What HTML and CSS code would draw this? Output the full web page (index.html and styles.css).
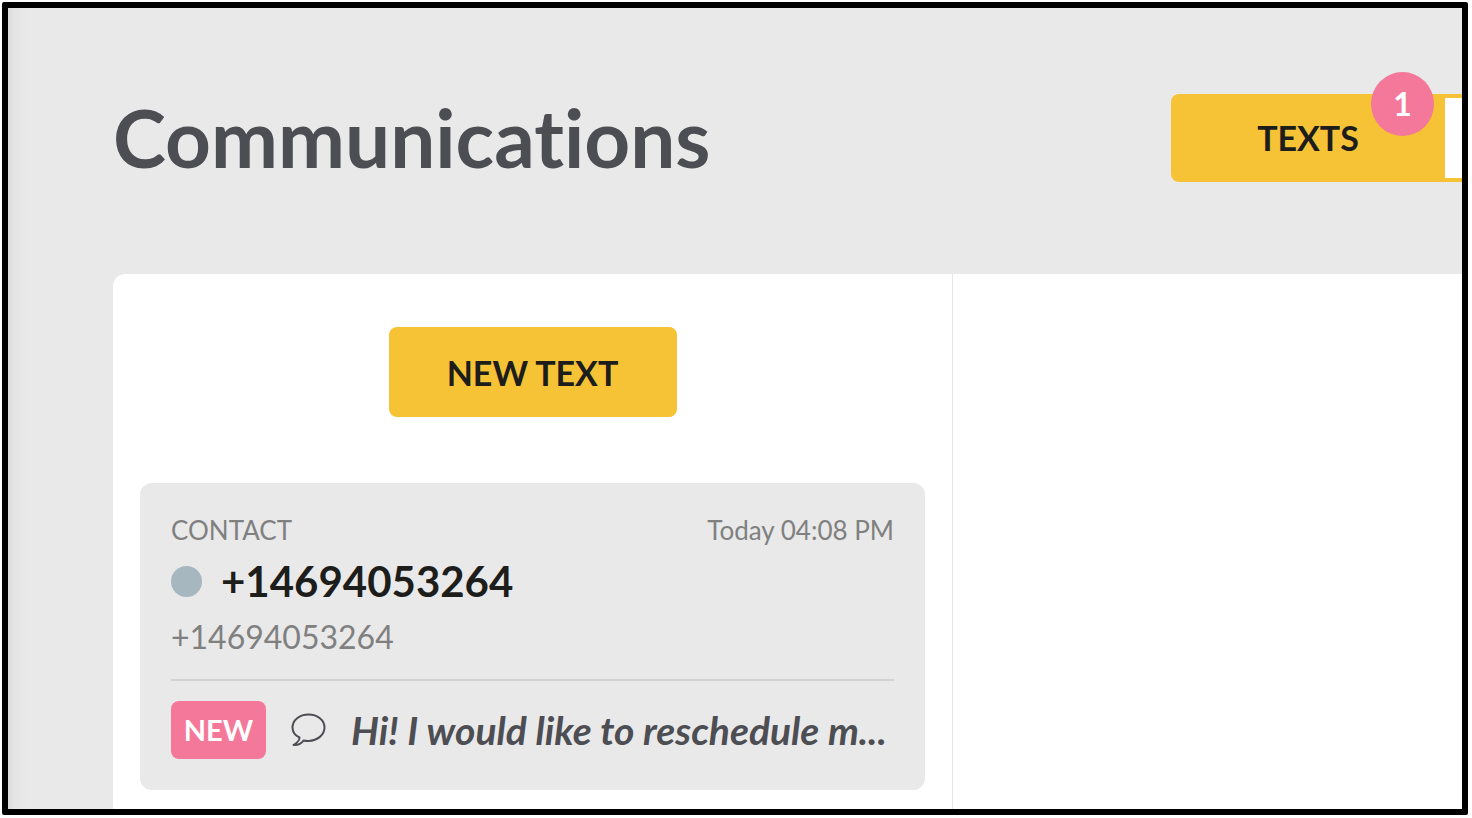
FILE: index.html
```html
<!DOCTYPE html>
<html lang="en">
<head>
	<meta charset="UTF-8">
	<title>Communications</title>
	<link rel="stylesheet" href="styles.css">
</head>
<body>
	<div class="frame">
		<header class="header">
			<h1 class="title">Communications</h1>
			<div class="toggle">
				<button type="button" class="tab active">TEXTS<span class="badge">1</span></button>
				<div class="rest"></div>
			</div>
		</header>
		<main class="panel">
			<section class="list">
				<button type="button" class="new-text">NEW TEXT</button>
				<article class="card">
					<div class="meta">
						<span>CONTACT</span>
						<time>Today 04:08 PM</time>
					</div>
					<h2 class="name"><span class="dot"></span>+14694053264</h2>
					<p class="phone">+14694053264</p>
					<div class="message">
						<span class="tag">NEW</span>
						<svg class="bubble" viewBox="0 0 36 36" aria-hidden="true">
							<path d="M18.500 2.500C9.500 2.500 2.500 8 2.500 15.500C2.500 20 5 23.500 9.500 25.500C10 28.500 7.500 30.500 3.500 33C8.500 33.500 11.500 31.500 13.500 28.500C15 29 17 29 18.500 29C27.500 28.500 34.500 23 34.500 15.500C34.500 8 27.500 2.500 18.500 2.500Z"/>
						</svg>
						<p class="excerpt">Hi! I would like to reschedule m...</p>
					</div>
				</article>
			</section>
			<section class="thread"></section>
		</main>
	</div>
</body>
</html>
```

FILE: styles.css
```css
*{box-sizing: border-box;}
body,h1,h2,p{margin: 0; padding: 0;}
body{background: #fff; font-family: Lato, "Liberation Sans", sans-serif; font-variant-ligatures: none; padding: 2px 4px 3px 2px;}
button{border: none; padding: 0; font-family: inherit; font-size: 34px; font-weight: bold; color: #1d1d1b; background: #f5c335; cursor: pointer;}

.frame{display: flex; flex-direction: column; height: calc(100vh - 5px); border: 6px solid #000; border-radius: 2px; overflow: hidden; background: linear-gradient(to right, #dadada, #e5e5e5 6px, #e9e9e9 20px);}

/* top bar */
.header{display: flex; justify-content: space-between; align-items: center; padding: 86px 0 92px 105px;}
.title{font-size: 80px; line-height: 86px; padding-bottom: 2px; color: #4d4e53;}
.toggle{display: flex; height: 88px; padding: 4px 0 4px 4px; background: #f5c335; border-radius: 8px 0 0 8px;}
.tab{position: relative; width: 270px; padding: 0 4px 2px 0;}
.rest{width: 17px; background: #fff;}
.badge{position: absolute; top: -26px; right: 11px; width: 63px; height: 64px; border-radius: 50%; background: #f37899; color: #fff; font-size: 32px; line-height: 64px;}

.panel{display: flex; flex: 1; margin-left: 105px; background: #fff; border-radius: 12px 0 0 0;}
.list{flex: 0 0 840px; min-width: 0; padding: 53px 27px 0; border-right: 1px solid #e6e6e6;}
.thread{flex: 1;}
.new-text{display: block; width: 288px; height: 90px; margin: 0 auto 66px; border-radius: 8px;}

/* conversation card */
.card{padding: 31px; border-radius: 12px; background: #e9e9e9;}
.meta{display: flex; justify-content: space-between; font-size: 26px; line-height: 32px; color: #808080;}
.name{display: flex; align-items: center; gap: 19px; font-size: 42px; line-height: 70px; color: #1d1d1b;}
.dot{width: 31px; height: 31px; border-radius: 50%; background: #a6b7c0;}
.phone{font-size: 32px; line-height: 42px; color: #808080;}
.message{display: flex; align-items: center; margin-top: 21px; padding-top: 20px; border-top: 2px solid #d2d2d2;}
.tag{flex: none; width: 95px; border-radius: 8px; background: #f37899; color: #fff; font-size: 29px; font-weight: bold; line-height: 58px; text-align: center;}
.bubble{flex: none; width: 36px; height: 36px; margin: 0 25px 0 24px; fill: none; stroke: #4d4e53; stroke-width: 2; stroke-linejoin: round;}
.excerpt{flex: 1; min-width: 0; overflow: hidden; text-overflow: ellipsis; white-space: nowrap; font-size: 39px; line-height: 58px; font-weight: bold; font-style: italic; color: #4d4e53;}
```
